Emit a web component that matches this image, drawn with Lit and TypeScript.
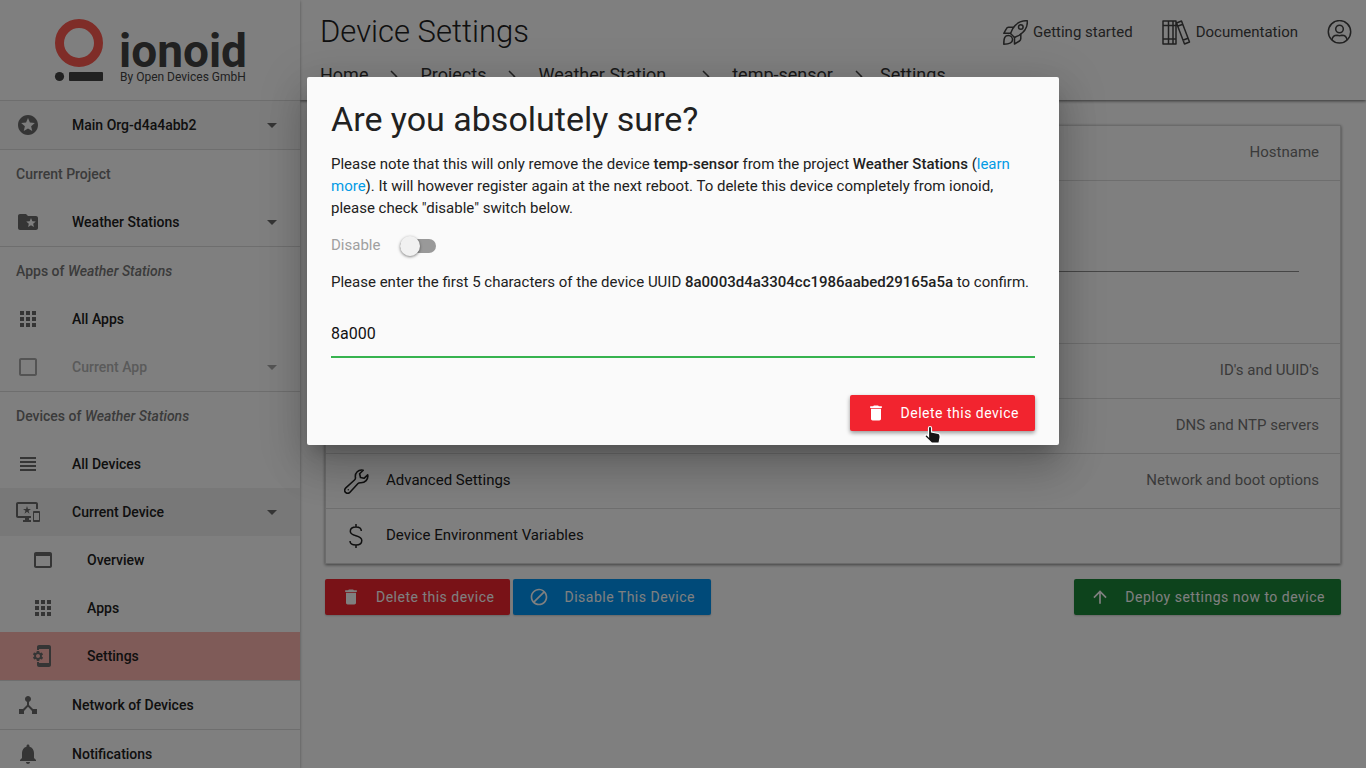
import { LitElement, html, css, svg, nothing } from "lit";
import { customElement, property } from "lit/decorators.js";
import { classMap } from "lit/directives/class-map.js";

const STAR_CIRCLE = svg`<path d="M11.99 2C6.47 2 2 6.48 2 12s4.47 10 9.99 10C17.52 22 22 17.52 22 12S17.52 2 11.99 2zm4.24 16L12 15.45 7.77 18l1.12-4.81-3.73-3.23 4.92-.42L12 5l1.92 4.53 4.92.42-3.73 3.23L16.23 18z"/>`;
const FOLDER_STAR = svg`<path d="M20 6h-8l-2-2H4c-1.1 0-1.99.9-1.99 2L2 18c0 1.1.9 2 2 2h16c1.1 0 2-.9 2-2V8c0-1.1-.9-2-2-2zm-2.060 11L15 15.280 12.060 17l.78-3.330-2.590-2.240 3.410-.29L15 8l1.340 3.140 3.410.29-2.590 2.240.78 3.330z"/>`;
const APPS = svg`<path d="M4 8h4V4H4v4zm6 12h4v-4h-4v4zm-6 0h4v-4H4v4zm0-6h4v-4H4v4zm6 0h4v-4h-4v4zm6-10v4h4V4h-4zm-6 4h4V4h-4v4zm6 6h4v-4h-4v4zm0 6h4v-4h-4v4z"/>`;
const BOX = svg`<path d="M19 5v14H5V5h14m0-2H5c-1.100 0-2 .9-2 2v14c0 1.100.9 2 2 2h14c1.100 0 2-.9 2-2V5c0-1.100-.9-2-2-2z"/>`;
const LINES = svg`<path d="M4 15h16v-2H4v2zm0 4h16v-2H4v2zm0-8h16V9H4v2zm0-6v2h16V5H4z"/>`;
const DEVICES = svg`<path d="M23 11.010L18 11c-.55 0-1 .45-1 1v9c0 .55.45 1 1 1h5c.55 0 1-.45 1-1v-9c0-.55-.45-.99-1-.99zM23 20h-5v-7h5v7zM20 2H2C.89 2 0 2.890 0 4v12c0 1.100.89 2 2 2h7v2H7v2h8v-2h-2v-2h2v-2H2V4h18v5h2V4c0-1.110-.9-2-2-2zm-8.030 7L11 6l-.97 3H7l2.470 1.760-.94 2.910 2.470-1.800 2.470 1.800-.94-2.910L15 9h-3.030z"/>`;
const WINDOW = svg`<path d="M19 4H5c-1.110 0-2 .9-2 2v12c0 1.100.89 2 2 2h14c1.100 0 2-.9 2-2V6c0-1.100-.89-2-2-2zm0 14H5V8h14v10z"/>`;
const PHONE_GEAR = svg`<path transform="translate(-1 0)" d="M11.8 12.500v-1l1.100-.8c.1-.1.1-.2.1-.3l-1-1.700c-.1-.2-.2-.2-.3-.1l-1.300.4c-.3-.2-.6-.4-.9-.5l-.2-1.300c0-.1-.1-.2-.3-.2H7c-.1 0-.2.1-.3.2l-.2 1.300c-.3.1-.6.3-.9.5l-1.300-.5c-.1 0-.2 0-.3.1l-1 1.700c-.1.1 0 .2.1.3l1.100.8v1l-1.100.8c-.1.2-.1.3-.1.4l1 1.700c.1.2.2.2.3.1l1.400-.4c.3.2.6.4.9.5l.2 1.300c0 .1.100.2.2.2h2c.1 0 .2-.1.3-.2l.2-1.300c.3-.1.6-.3.9-.5l1.300.5c.1 0 .2 0 .3-.1l1-1.700c.1-.1 0-.2-.1-.3l-1.100-.9zM8 14c-1.100 0-2-.9-2-2s.9-2 2-2 2 .9 2 2-.9 2-2 2zM19 1H9c-1.100 0-2 .9-2 2v3h2V5h10v14H9v-1H7v3c0 1.100.9 2 2 2h10c1.100 0 2-.9 2-2V3c0-1.100-.9-2-2-2z"/>`;
const HUB = svg`<path d="M17 16l-4-4V8.820C14.160 8.400 15 7.300 15 6c0-1.660-1.340-3-3-3S9 4.340 9 6c0 1.300.84 2.400 2 2.820V12l-4 4H3v5h5v-3.050l4-4.200 4 4.200V21h5v-5h-4z"/>`;
const BELL = svg`<path d="M12 22c1.100 0 2-.9 2-2h-4c0 1.100.89 2 2 2zm6-6v-5c0-3.070-1.640-5.640-4.500-6.320V4c0-.83-.67-1.500-1.500-1.500s-1.500.67-1.500 1.500v.68C7.630 5.360 6 7.920 6 11v5l-2 2v1h16v-1l-2-2z"/>`;
const CARET = svg`<path d="M7 10l5 5 5-5z"/>`;
const TRASH = svg`<path d="M6 19c0 1.100.9 2 2 2h8c1.100 0 2-.9 2-2V7H6v12zM19 4h-3.500l-1-1h-5l-1 1H5v2h14V4z"/>`;
const BLOCK = svg`<path d="M12 2C6.480 2 2 6.480 2 12s4.480 10 10 10 10-4.480 10-10S17.520 2 12 2zM4 12c0-4.420 3.580-8 8-8 1.850 0 3.550.63 4.900 1.690L5.690 16.900C4.630 15.550 4 13.850 4 12zm8 8c-1.850 0-3.550-.63-4.900-1.690L18.310 7.100C19.370 8.450 20 10.150 20 12c0 4.420-3.580 8-8 8z"/>`;
const ARROW_UP = svg`<path d="M4 12l1.410 1.410L11 7.830V20h2V7.830l5.580 5.590L20 12l-8-8-8 8z"/>`;

const ROCKET = svg`<g fill="none" stroke="currentColor" stroke-width="1.500" stroke-linejoin="round" stroke-linecap="round"><path d="M24.300 .8C17.500 .3 13 3.500 9.800 8.500L7.500 13.500L11.500 17.500L16 15.300C21.500 12 24.800 8 24.300 .8z"/><circle cx="17.800" cy="7" r="2.300"/><path d="M10.300 7.300H5.500C4.500 7.300 3.800 7.800 3.300 8.800L.8 13.300H7.500M17.800 14.200V18.500C17.800 20 17.300 20.500 16.500 21L11.500 24V17.500M5.500 15.500C1.800 15.500 .8 17.500 .8 24.200C6 24.200 9.500 23.500 9.500 19.800C9.500 17.500 7.700 15.500 5.500 15.500z"/></g>`;
const BOOKS = svg`<g fill="none" stroke="currentColor" stroke-width="1.500" stroke-linejoin="round"><path d="M1 1H14V24H1zM6.500 1V24M11 1V24M1 5.500H14M1 19H14M14.500 3L19.500 1L27.500 22L22.500 24zM16 6L21 4.200M20.800 20.200L26 18.200"/></g>`;
const ACCOUNT = svg`<g fill="none" stroke="currentColor" stroke-width="1.500"><circle cx="12.500" cy="11.800" r="11.200"/><circle cx="12.500" cy="9" r="3.800"/><path d="M5 20C5.500 16 8 15.300 10 15.300C12 16 13 16 15 15.300C17 15.300 19.500 16 20 20"/></g>`;
const WRENCH = svg`<path fill="none" stroke="currentColor" stroke-width="1.600" stroke-linejoin="round" d="M19.200 1.200C14.500 0 10.500 4 11.500 8.800C11.500 9.800 11.300 10.300 10.500 11L1.800 18.800C.2 20.300 .4 22.300 1.500 23.400C2.700 24.500 4.800 24.500 6.200 23L14 14.500C14.700 13.800 15.300 13.700 16.300 13.700C21 14 24.600 10.500 23.700 5.800L20 9.300L16.500 8.500L15.600 4.800z"/><circle cx="4.300" cy="20.700" r="0.700"/>`;
const DOLLAR = svg`<path fill="none" stroke="currentColor" stroke-width="1.500" d="M17.300 7C17.300 4.300 15 3 12 3C8.700 3 6.300 4.500 6.300 7.300C6.300 13.500 17.800 9.800 17.800 16.500C17.800 19.500 15.500 21 12 21C8.500 21 6 19.700 6 17M12 0V3M12 21V24"/>`;

function icon(body: unknown, size = 24, box = `0 0 ${size} ${size}`) {
  const [, , w, h] = box.split(" ").map(Number);
  return html`<svg width=${size} height=${(size * h) / w} viewBox=${box} fill="currentColor" aria-hidden="true">${body}</svg>`;
}

@customElement("nav-item")
class NavItem extends LitElement {
  @property() label = "";
  @property({ attribute: false }) glyph: unknown = nothing;
  @property({ type: Boolean }) menu = false;
  @property({ type: Boolean }) nested = false;
  @property({ type: Boolean }) muted = false;
  @property() tone = "";

  static styles = css`
    :host { display: block; }
    .item {
      display: flex; align-items: center; width: 100%; height: 48px; box-sizing: border-box;
      padding: 0 16px; border: 0; background: none; color: #212121;
      font: 500 14px/20px Roboto, sans-serif; text-align: left; text-decoration: none;
    }
    .nested { padding-left: 31px; }
    .open { background: #f0f0f0; }
    .current { background: #ffb7b0; }
    .tinted { background: #f8f8f8; }
    .muted { color: #b5b5b5; }
    svg { flex: none; color: #6b6b6b; }
    .muted svg { color: #a8a8a8; }
    .label { flex: 1; margin-left: 32px; }
  `;

  render() {
    const classes = classMap({
      item: true, nested: this.nested, muted: this.muted,
      open: this.tone === "open", current: this.tone === "current", tinted: this.tone === "tinted",
    });
    const body = html`${icon(this.glyph)}<span class="label">${this.label}</span>${this.menu ? icon(CARET) : nothing}`;
    return this.menu
      ? html`<button class=${classes} ?disabled=${this.muted}>${body}</button>`
      : html`<a class=${classes} href="#">${body}</a>`;
  }
}

@customElement("app-root")
class AppRoot extends LitElement {
  static styles = css`
    :host {
      display: block; height: 100vh; overflow: hidden; position: relative; background: #fff; color: #212121;
      font: 400 15px/22px Roboto, sans-serif;
    }
    svg { flex: none; display: block; }
    button { font-family: inherit; }
    .shell { display: flex; height: 100%; }
    .side { position: relative; z-index: 2; flex: none; width: 300px; background: #fff; box-shadow: 0 1px 3px rgba(0,0,0,.35); overflow: hidden; }
    .brand { display: flex; justify-content: center; height: 100px; border-bottom: 1px solid #dcdcdc; }
    .group { border-bottom: 1px solid #dcdcdc; }
    .heading { margin: 0; padding: 0 16px; font-size: 14px; font-weight: 500; line-height: 48px; color: #767676; }
    .main { flex: 1; min-width: 0; display: flex; flex-direction: column; }
    .top { height: 100px; box-sizing: border-box; padding: 12px 14px 0 20px; background: #fff; box-shadow: 0 1px 3px rgba(0,0,0,.6); }
    .bar { display: flex; align-items: center; height: 40px; }
    .title { flex: 1; margin: 0; font-size: 31px; font-weight: 300; line-height: 40px; }
    .links { display: flex; align-items: center; gap: 29px; }
    .link { display: flex; align-items: center; gap: 5px; color: #424242; text-decoration: none; }
    .crumbs { display: flex; align-items: center; margin-top: 12px; font-size: 18px; line-height: 22px; }
    .crumbs a { color: #333; text-decoration: none; }
    .crumbs svg { margin: 0 16px; }
    .crumbs .wide { margin-right: 14px; }
    .crumbs .near { margin-right: 11px; }
    .content { padding: 25px; }
    .card { background: #fff; border: 1px solid #d6d6d6; box-shadow: 0 1px 3px rgba(0,0,0,.5); }
    .row { display: flex; align-items: center; height: 54px; padding: 0 21px 0 18px; border-bottom: 1px solid #dcdcdc; }
    .row:last-child { border-bottom: 0; }
    .name { flex: 1; margin: 0 0 2px 17px; }
    .hint { margin-bottom: 2px; color: #757575; }
    .panel { height: 163px; box-sizing: border-box; padding: 59px 41px 0 36px; border-bottom: 1px solid #dcdcdc; }
    .host { display: block; width: 100%; height: 32px; box-sizing: border-box; padding: 0; border: 0; border-bottom: 1px solid #8c8c8c; background: none; }
    .actions { display: flex; gap: 3px; margin-top: 15px; }
    .btn {
      display: flex; align-items: center; gap: 15px; height: 36px; padding: 0 16px; border: 0; border-radius: 2px;
      color: #fff; font-size: 14px; letter-spacing: .5px; box-shadow: 0 1px 2px rgba(0,0,0,.2);
    }
    .red { background: #f2242f; }
    .blue { background: #0095f2; }
    .green { background: #1b8639; }
    .push { margin-left: auto; }
    .shade { position: absolute; inset: 0; z-index: 5; background: rgba(0,0,0,.5); display: flex; align-items: flex-start; justify-content: center; padding-top: 77px; }
    .dialog {
      width: 80%; max-width: 752px; box-sizing: border-box; padding: 20px 24px 14px; background: #fafafa; border-radius: 2px; color: #212121;
      box-shadow: 0 11px 15px -7px rgba(0,0,0,.2), 0 24px 38px 3px rgba(0,0,0,.14), 0 9px 46px 8px rgba(0,0,0,.12);
    }
    .dialog h2 { margin: 0 0 12px; font-size: 34px; font-weight: 400; line-height: 44px; }
    .dialog p { margin: 0; }
    .dialog b { font-weight: 500; }
    .more { color: #039be5; text-decoration: none; }
    .switch { display: flex; align-items: center; height: 52px; gap: 20px; color: #a0a0a0; }
    .toggle { appearance: none; position: relative; width: 36px; height: 14px; margin: 2px 0 0; border-radius: 7px; background: #999; }
    .toggle::before { content: ""; position: absolute; left: 0; top: -3px; width: 20px; height: 20px; border-radius: 50%; background: #f1f1f1; box-shadow: 0 1px 3px rgba(0,0,0,.5); }
    .confirm {
      display: block; width: 100%; height: 42px; box-sizing: border-box; margin-top: 23px; padding: 0 0 6px; border: 0; border-bottom: 2px solid #37b34f;
      background: none; color: #111; font: 400 16px/22px Roboto, sans-serif; outline: none; border-radius: 0;
    }
    .foot { display: flex; justify-content: flex-end; margin-top: 37px; }
    .foot .btn { box-shadow: 0 2px 4px rgba(0,0,0,.4); }
    .pointer { position: absolute; left: 924px; top: 425px; z-index: 6; }
  `;

  private chevron(cls = "") {
    return html`<svg class=${cls} width="20" height="20" viewBox="0 0 20 20" fill="none" stroke="#444" stroke-width="1.500" aria-hidden="true"><path d="M7 6L12.500 11.500L7 17"/></svg>`;
  }

  private row(name: string, hint: string, glyph?: unknown) {
    return html`<div class="row">${glyph ? icon(glyph, 25) : nothing}<span class="name">${name}</span><span class="hint">${hint}</span></div>`;
  }

  render() {
    return html`
      <div class="shell">
        <aside class="side">
          <div class="brand">
            <svg width="192" height="100" viewBox="0 0 192 100" role="img" aria-label="ionoid">
              <circle cx="25" cy="43" r="19.500" fill="none" stroke="#ff5a50" stroke-width="9"/>
              <circle cx="5.500" cy="76.500" r="4.600" fill="#424242"/>
              <rect x="15" y="72" width="34" height="9" rx="1" fill="#424242"/>
              <text x="65" y="67" font-family="Roboto, sans-serif" font-weight="700" font-size="46" fill="#424242">ionoid</text>
              <text x="66" y="81" font-family="Roboto, sans-serif" font-size="12" fill="#424242">By Open Devices GmbH</text>
            </svg>
          </div>
          <nav>
            <div class="group"><nav-item label="Main Org-d4a4abb2" .glyph=${STAR_CIRCLE} menu tone="tinted"></nav-item></div>
            <div class="group">
              <h3 class="heading">Current Project</h3>
              <nav-item label="Weather Stations" .glyph=${FOLDER_STAR} menu></nav-item>
            </div>
            <div class="group">
              <h3 class="heading">Apps of <em>Weather Stations</em></h3>
              <nav-item label="All Apps" .glyph=${APPS}></nav-item>
              <nav-item label="Current App" .glyph=${BOX} menu muted></nav-item>
            </div>
            <div class="group">
              <h3 class="heading">Devices of <em>Weather Stations</em></h3>
              <nav-item label="All Devices" .glyph=${LINES}></nav-item>
              <nav-item label="Current Device" .glyph=${DEVICES} menu tone="open"></nav-item>
              <nav-item label="Overview" .glyph=${WINDOW} nested></nav-item>
              <nav-item label="Apps" .glyph=${APPS} nested></nav-item>
              <nav-item label="Settings" .glyph=${PHONE_GEAR} nested tone="current"></nav-item>
            </div>
            <div class="group"><nav-item label="Network of Devices" .glyph=${HUB}></nav-item></div>
            <nav-item label="Notifications" .glyph=${BELL}></nav-item>
          </nav>
        </aside>
        <main class="main">
          <header class="top">
            <div class="bar">
              <h1 class="title">Device Settings</h1>
              <div class="links">
                <a class="link" href="#">${icon(ROCKET, 25)}Getting started</a>
                <a class="link" href="#">${icon(BOOKS, 29, "0 0 29 25")}Documentation</a>
                <a class="link" href="#" aria-label="Account">${icon(ACCOUNT, 25)}</a>
              </div>
            </div>
            <nav class="crumbs" aria-label="Breadcrumb">
              <a href="#">Home</a>${this.chevron()}<a href="#">Projects</a>${this.chevron()}<a class="wide" href="#">Weather Station</a>${this.chevron()}<a href="#">temp-sensor</a>${this.chevron("near")}<a href="#">Settings</a>
            </nav>
          </header>
          <div class="content">
            <section class="card">
              ${this.row("", "Hostname")}
              <div class="panel"><input class="host" type="text" aria-label="Hostname" /></div>
              ${this.row("", "ID's and UUID's")}
              ${this.row("", "DNS and NTP servers")}
              ${this.row("Advanced Settings", "Network and boot options", WRENCH)}
              ${this.row("Device Environment Variables", "", DOLLAR)}
            </section>
            <div class="actions">
              <button class="btn red">${icon(TRASH, 20, "0 0 24 24")}Delete this device</button>
              <button class="btn blue">${icon(BLOCK, 20, "0 0 24 24")}Disable This Device</button>
              <button class="btn green push">${icon(ARROW_UP, 20, "0 0 24 24")}Deploy settings now to device</button>
            </div>
          </div>
        </main>
      </div>
      <div class="shade">
        <section class="dialog" role="dialog" aria-modal="true" aria-labelledby="ask">
          <h2 id="ask">Are you absolutely sure?</h2>
          <p>Please note that this will only remove the device <b>temp-sensor</b> from the project <b>Weather Stations</b> (<a class="more" href="#">learn more</a>). It will however register again at the next reboot. To delete this device completely from ionoid, please check "disable" switch below.</p>
          <div class="switch"><label for="disable">Disable</label><input class="toggle" id="disable" type="checkbox" role="switch" /></div>
          <p><label for="uuid">Please enter the first 5 characters of the device UUID <b>8a0003d4a3304cc1986aabed29165a5a</b> to confirm.</label></p>
          <input class="confirm" id="uuid" type="text" .value=${"8a000"} />
          <div class="foot"><button class="btn red">${icon(TRASH, 20, "0 0 24 24")}Delete this device</button></div>
        </section>
      </div>
      <svg class="pointer" width="20" height="20" viewBox="0 0 20 20" aria-hidden="true">
        <path d="M4.500 3C4.500 1 7.500 1 7.500 3V7L14.500 8.500C16 9 16.300 11 16 13L15 18H7.500L1.300 12C0.300 10.500 2 9.500 3.200 10L4.500 11.500z" fill="#151515" stroke="#fff" stroke-width="1.200"/>
      </svg>
    `;
  }
}
